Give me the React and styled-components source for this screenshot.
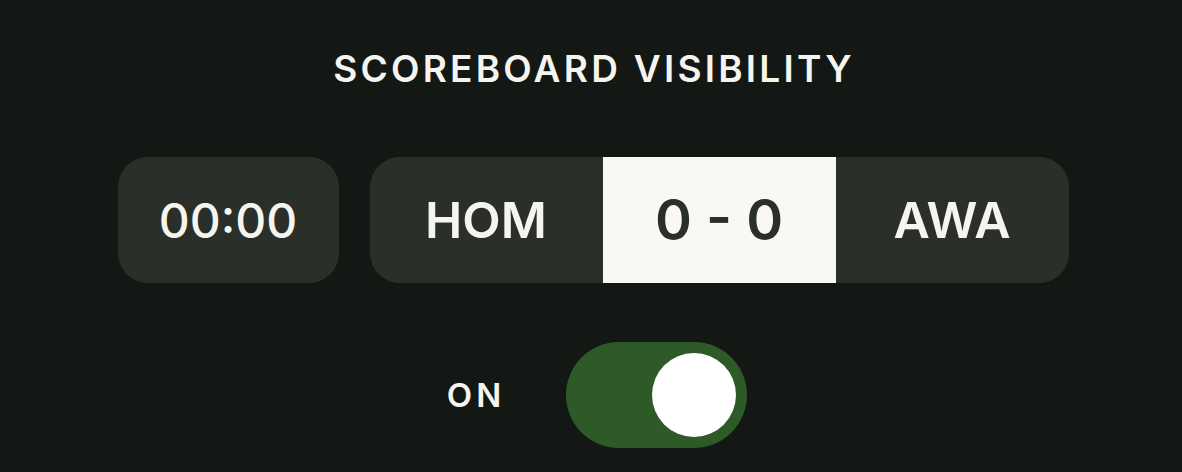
import React, { useState } from 'react'
import styled, { createGlobalStyle } from 'styled-components'

const GlobalStyle = createGlobalStyle`
  html, body {
    margin: 0;
    padding: 0;
    background: #141814;
  }
  body {
    font-family: Inter, "Noto Sans", "Liberation Sans", sans-serif;
    color: #f6f4ef;
  }
`

const Page = styled.div`
  width: 1182px;
  height: 472px;
  display: flex;
  flex-direction: column;
  align-items: center;
  padding: 46px 0 0 4px;
  box-sizing: border-box;
`

const Title = styled.h2`
  margin: 0 0 0 2px;
  font-size: 37px;
  font-weight: 600;
  letter-spacing: 0.088em;
  line-height: 46px;
  text-transform: uppercase;
  color: #f6f4ef;
`

const Board = styled.div`
  display: flex;
  gap: 31px;
  margin-top: 65px;
`

const Timer = styled.div`
  width: 221px;
  height: 126px;
  border-radius: 30px;
  background: #2a2f29;
  display: flex;
  align-items: center;
  justify-content: center;
  font-size: 48px;
  font-weight: 500;
`

const ScoreGroup = styled.div`
  display: flex;
  height: 126px;
  border-radius: 30px;
  overflow: hidden;
  background: #2a2f29;
`

const Cell = styled.div`
  width: 233px;
  display: flex;
  align-items: center;
  justify-content: center;
  font-size: ${({ $score }) => ($score ? '56px' : '50px')};
  font-weight: 600;
  background: ${({ $score }) => ($score ? '#f9f8f5' : 'transparent')};
  color: ${({ $score }) => ($score ? '#2a2f29' : '#f6f4ef')};
`

const ToggleRow = styled.div`
  display: flex;
  align-items: center;
  gap: 61px;
  margin-top: 59px;
  margin-left: 8px;
`

const ToggleLabel = styled.span`
  font-size: 33px;
  font-weight: 600;
  letter-spacing: 0.12em;
`

const Switch = styled.button`
  width: 181px;
  height: 106px;
  border: none;
  border-radius: 53px;
  padding: 11px;
  background: ${({ $on }) => ($on ? '#2d5a27' : '#3a403a')};
  display: flex;
  justify-content: ${({ $on }) => ($on ? 'flex-end' : 'flex-start')};
  cursor: pointer;
  box-sizing: border-box;
`

const Knob = styled.span`
  width: 84px;
  height: 84px;
  border-radius: 50%;
  background: #ffffff;
`

export default function App() {
  const [on, setOn] = useState(true)
  return (
    <>
      <GlobalStyle />
      <Page>
        <Title>Scoreboard Visibility</Title>
        <Board>
          <Timer>00:00</Timer>
          <ScoreGroup>
            <Cell>HOM</Cell>
            <Cell $score>0 - 0</Cell>
            <Cell>AWA</Cell>
          </ScoreGroup>
        </Board>
        <ToggleRow>
          <ToggleLabel>{on ? 'ON' : 'OFF'}</ToggleLabel>
          <Switch $on={on} onClick={() => setOn(!on)}>
            <Knob />
          </Switch>
        </ToggleRow>
      </Page>
    </>
  )
}
